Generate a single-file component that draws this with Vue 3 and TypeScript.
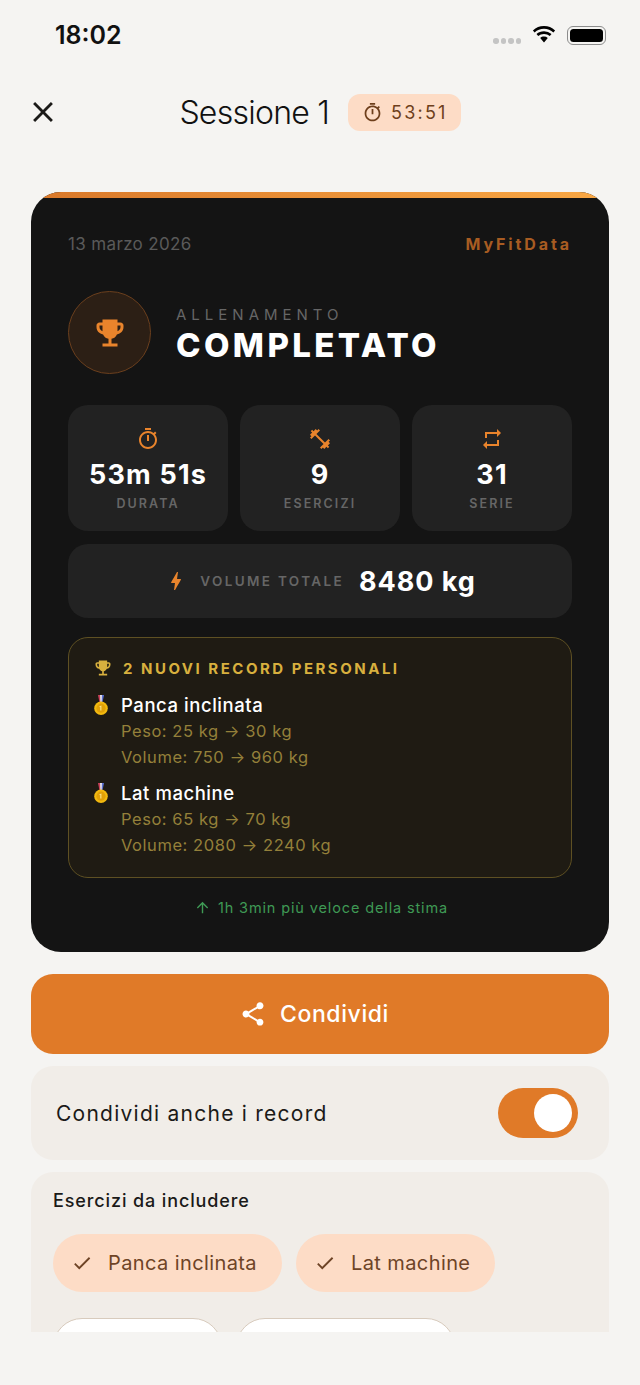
<script setup lang="ts">
const icons = {
  timer: 'M15 1H9v2h6V1zm-4 13h2V8h-2v6zm8.03-6.61l1.42-1.42c-.43-.51-.9-.99-1.41-1.41l-1.42 1.42C16.07 4.74 14.12 4 12 4c-4.97 0-9 4.03-9 9s4.02 9 9 9 9-4.03 9-9c0-2.12-.74-4.07-1.97-5.61zM12 20c-3.87 0-7-3.13-7-7s3.13-7 7-7 7 3.13 7 7-3.13 7-7 7z',
  trophy: 'M19 5h-2V3H7v2H5c-1.1 0-2 .9-2 2v1c0 2.55 1.92 4.63 4.39 4.94.63 1.5 1.98 2.63 3.61 2.96V19H7v2h10v-2h-4v-3.1c1.63-.33 2.98-1.46 3.61-2.96C19.08 12.63 21 10.55 21 8V7c0-1.1-.9-2-2-2zM5 8V7h2v3.82C5.84 10.4 5 9.3 5 8zm14 0c0 1.3-.84 2.4-2 2.82V7h2v1z',
  dumbbell: 'M20.57 14.86L22 13.43 20.57 12 17 15.57 8.43 7 12 3.43 10.57 2 9.14 3.43 7.71 2 5.57 4.14 4.14 2.71 2.71 4.14l1.43 1.43L2 7.71l1.43 1.43L2 10.57 3.43 12 7 8.43 15.57 17 12 20.57 13.43 22l1.43-1.43L16.29 22l2.14-2.14 1.43 1.43 1.43-1.43-1.43-1.43L22 16.29z',
  repeat: 'M7 7h10v3l4-4-4-4v3H5v6h2V7zm10 10H7v-3l-4 4 4 4v-3h12v-6h-2v4z',
  bolt: 'M11 21h-1l1-7H7.5c-.58 0-.57-.32-.38-.66.19-.34.05-.08.07-.12C8.48 10.94 10.42 7.54 13 3h1l-1 7h3.5c.49 0 .56.33.47.51l-.07.15C12.96 17.55 11 21 11 21z',
  share: 'M18 16.08c-.76 0-1.44.3-1.96.77L8.91 12.7c.05-.23.09-.46.09-.7s-.04-.47-.09-.7l7.05-4.11c.54.5 1.25.81 2.04.81 1.66 0 3-1.34 3-3s-1.34-3-3-3-3 1.34-3 3c0 .24.04.47.09.7L8.04 9.81C7.5 9.31 6.79 9 6 9c-1.66 0-3 1.34-3 3s1.34 3 3 3c.79 0 1.5-.31 2.04-.81l7.12 4.16c-.05.21-.08.43-.08.65 0 1.61 1.31 2.92 2.92 2.92s2.92-1.31 2.92-2.92-1.31-2.92-2.92-2.92z',
  check: 'M9 16.17L4.83 12l-1.42 1.41L9 19 21 7l-1.41-1.41z',
  up: 'M4 12l1.41 1.41L11 7.83V20h2V7.83l5.58 5.59L20 12l-8-8-8 8z',
  close: 'M19 6.41L17.59 5 12 10.59 6.41 5 5 6.41 10.59 12 5 17.59 6.41 19 12 13.41 17.59 19 19 17.59 13.41 12z',
};

const stats = [
  { icon: icons.timer, value: '53m 51s', label: 'DURATA' },
  { icon: icons.dumbbell, value: '9', label: 'ESERCIZI' },
  { icon: icons.repeat, value: '31', label: 'SERIE' },
];

const records = [
  { name: 'Panca inclinata', lines: ['Peso: 25 kg → 30 kg', 'Volume: 750 → 960 kg'] },
  { name: 'Lat machine', lines: ['Peso: 65 kg → 70 kg', 'Volume: 2080 → 2240 kg'] },
];

const selected = ['Panca inclinata', 'Lat machine'];
</script>

<template>
  <div class="screen">
    <div class="status">
      <span class="time">18:02</span>
      <div class="status-icons">
        <div class="dots"><i></i><i></i><i></i><i></i></div>
        <svg class="wifi" viewBox="0 0 24 18" width="24" height="19">
          <path d="M12 3.2c3.6 0 6.9 1.4 9.4 3.7l1.7-2A16.4 16.4 0 0 0 12 .6 16.4 16.4 0 0 0 .9 4.9l1.7 2A13.8 13.8 0 0 1 12 3.2z" />
          <path d="M12 8.4c2.2 0 4.2.8 5.8 2.2l1.7-2A11.3 11.3 0 0 0 12 5.8c-2.9 0-5.5 1-7.5 2.8l1.7 2A8.7 8.7 0 0 1 12 8.4z" />
          <path d="M12 11c-1.4 0-2.8.5-3.8 1.4L12 17l3.8-4.6A5.8 5.8 0 0 0 12 11z" />
        </svg>
        <div class="battery"><div class="battery-fill"></div></div>
      </div>
    </div>

    <header class="header">
      <svg class="close" viewBox="0 0 24 24" width="34" height="34"><path :d="icons.close" /></svg>
      <div class="header-center">
        <span class="title">Sessione 1</span>
        <div class="badge">
          <svg viewBox="0 0 24 24" width="21" height="21"><path :d="icons.timer" /></svg>
          <span>53:51</span>
        </div>
      </div>
    </header>

    <main class="content">
      <section class="card">
        <div class="card-bar"></div>
        <div class="card-body">
          <div class="card-top">
            <span class="date">13 marzo 2026</span>
            <span class="brand">MyFitData</span>
          </div>

          <div class="hero">
            <div class="hero-circle">
              <svg viewBox="0 0 24 24" width="36" height="36"><path :d="icons.trophy" /></svg>
            </div>
            <div>
              <div class="hero-small">ALLENAMENTO</div>
              <div class="hero-big">COMPLETATO</div>
            </div>
          </div>

          <div class="stats">
            <div v-for="s in stats" :key="s.label" class="stat">
              <svg viewBox="0 0 24 24" width="24" height="24"><path :d="s.icon" /></svg>
              <div class="stat-value">{{ s.value }}</div>
              <div class="stat-label">{{ s.label }}</div>
            </div>
          </div>

          <div class="volume">
            <svg viewBox="0 0 24 24" width="24" height="24"><path :d="icons.bolt" /></svg>
            <span class="volume-label">VOLUME TOTALE</span>
            <span class="volume-value">8480 kg</span>
          </div>

          <div class="records">
            <div class="records-head">
              <svg viewBox="0 0 24 24" width="20" height="20"><path :d="icons.trophy" /></svg>
              <span>2 NUOVI RECORD PERSONALI</span>
            </div>
            <div v-for="r in records" :key="r.name" class="record">
              <div class="record-name">
                <svg class="medal" viewBox="0 0 16 22" width="16" height="22">
                  <path d="M5 1h2.2l1.3 8H6.6z" fill="#c9425a" />
                  <path d="M11 1H8.8L7.5 9h1.9z" fill="#5a6fd0" />
                  <path d="M7 1h2l-.4 8H7.4z" fill="#e8e4ee" />
                  <circle cx="8" cy="14.2" r="6.8" fill="#f2b90f" />
                  <circle cx="8" cy="14.2" r="4.6" fill="#e0a008" />
                  <path d="M8.4 11.6v4.8H7.3v-3.6l-.8.4v-1z" fill="#fbe58a" />
                </svg>
                <span>{{ r.name }}</span>
              </div>
              <div v-for="l in r.lines" :key="l" class="record-line">{{ l }}</div>
            </div>
          </div>

          <div class="faster">
            <svg viewBox="0 0 24 24" width="17" height="17"><path :d="icons.up" /></svg>
            <span>1h 3min più veloce della stima</span>
          </div>
        </div>
      </section>

      <button class="share">
        <svg viewBox="0 0 24 24" width="28" height="28"><path :d="icons.share" /></svg>
        <span>Condividi</span>
      </button>

      <div class="toggle-row">
        <span>Condividi anche i record</span>
        <div class="toggle"><div class="thumb"></div></div>
      </div>

      <div class="include">
        <div class="include-title">Esercizi da includere</div>
        <div class="chips">
          <div v-for="c in selected" :key="c" class="chip">
            <svg viewBox="0 0 24 24" width="22" height="22"><path :d="icons.check" /></svg>
            <span>{{ c }}</span>
          </div>
        </div>
        <div class="chips">
          <div class="chip-off chip-a"></div>
          <div class="chip-off chip-b"></div>
        </div>
      </div>
    </main>
  </div>
</template>

<style scoped>
.screen {
  width: 640px;
  height: 1385px;
  overflow: hidden;
  background: #f5f4f2;
  font-family: Inter, "Liberation Sans", sans-serif;
  color: #1b1a18;
}

svg {
  display: block;
  flex-shrink: 0;
  fill: currentColor;
}

.status {
  height: 70px;
  padding: 0 34px 0 55px;
  display: flex;
  align-items: center;
  justify-content: space-between;
  box-sizing: border-box;
}

.time {
  font-size: 25px;
  font-weight: 600;
  color: #111;
}

.status-icons {
  display: flex;
  align-items: center;
}

.dots {
  display: flex;
  gap: 2px;
  margin: 12px 12px 0 0;
}

.dots i {
  width: 5.5px;
  height: 5.5px;
  border-radius: 50%;
  background: #c4c4c4;
}

.wifi {
  color: #000;
  margin: -2px 11px 0 -1px;
}

.battery {
  width: 39px;
  height: 19px;
  padding: 2px;
  box-sizing: border-box;
  border: 1.5px solid #8c8c8c;
  border-radius: 6px;
}

.battery-fill {
  height: 100%;
  background: #000;
  border-radius: 3.5px;
}

.header {
  height: 44px;
  margin: 20px 0 58px;
  padding: 0 26px;
  display: grid;
  grid-template-columns: 1fr auto 1fr;
  align-items: center;
}

.close {
  color: #1b1a18;
}

.header-center {
  grid-column: 2;
  display: flex;
  align-items: center;
  gap: 19px;
}

.title {
  font-size: 32px;
  font-weight: 300;
  letter-spacing: -0.75px;
  color: #111;
}

.badge {
  height: 37px;
  padding: 0 13px 0 14px;
  display: flex;
  align-items: center;
  gap: 8px;
  border-radius: 12px;
  background: #fddcc6;
  color: #6e3f1c;
  font-size: 18px;
  letter-spacing: 2.2px;
}

.content {
  height: 1140px;
  overflow: hidden;
  padding: 0 31px;
  display: flex;
  flex-direction: column;
  gap: 12px;
}

.card {
  flex-shrink: 0;
  height: 760px;
  margin-bottom: 10px;
  border-radius: 30px;
  overflow: hidden;
  background: #141414;
}

.card-bar {
  height: 6px;
  background: linear-gradient(90deg, #d9782a, #f9a845);
}

.card-body {
  padding: 36px 37px 0;
}

.card-top {
  display: flex;
  justify-content: space-between;
  align-items: center;
  line-height: 20px;
}

.date {
  font-size: 17px;
  color: #5a5a5a;
  letter-spacing: 0.35px;
}

.brand {
  font-size: 16px;
  font-weight: 700;
  letter-spacing: 2.9px;
  color: #a85c22;
}

.hero {
  margin-top: 37px;
  display: flex;
  align-items: center;
  gap: 25px;
}

.hero-circle {
  width: 83px;
  height: 83px;
  box-sizing: border-box;
  display: flex;
  align-items: center;
  justify-content: center;
  border-radius: 50%;
  border: 1.5px solid #6b3f1d;
  background: #2c1f15;
  color: #e9842c;
}

.hero-small {
  margin-top: 5px;
  font-size: 15px;
  line-height: 18px;
  letter-spacing: 5px;
  color: #666;
}

.hero-big {
  margin-top: 1px;
  font-size: 33px;
  line-height: 40px;
  font-weight: 800;
  letter-spacing: 3.4px;
  color: #fff;
}

.stats {
  margin-top: 31px;
  display: grid;
  grid-template-columns: repeat(3, 1fr);
  gap: 12px;
}

.stat {
  height: 126px;
  padding-top: 22px;
  box-sizing: border-box;
  display: flex;
  flex-direction: column;
  align-items: center;
  border-radius: 20px;
  background: #222;
  color: #e9842c;
}

.stat-value {
  margin-top: 7px;
  font-size: 27px;
  line-height: 34px;
  font-weight: 700;
  letter-spacing: 1.2px;
  color: #fff;
}

.stat-label {
  margin-top: 2px;
  font-size: 12.5px;
  line-height: 20px;
  font-weight: 600;
  letter-spacing: 2.1px;
  color: #666;
}

.volume {
  margin-top: 13px;
  height: 74px;
  display: flex;
  align-items: center;
  justify-content: center;
  border-radius: 20px;
  background: #222;
  color: #e9842c;
}

.volume-label {
  margin-left: 12px;
  font-size: 13.5px;
  font-weight: 600;
  letter-spacing: 2.35px;
  color: #666;
}

.volume-value {
  margin-left: 15px;
  font-size: 27px;
  font-weight: 700;
  letter-spacing: 0.95px;
  color: #fff;
}

.records {
  margin-top: 19px;
  height: 241px;
  box-sizing: border-box;
  padding: 20px 24px 0;
  border: 1px solid #5e5023;
  border-radius: 20px;
  background: #1f1b13;
}

.records-head {
  height: 20px;
  display: flex;
  align-items: center;
  gap: 10px;
  margin-bottom: 15px;
  font-size: 15px;
  font-weight: 700;
  letter-spacing: 2.5px;
  color: #d8b03e;
}

.record + .record {
  margin-top: 11px;
}

.record-name {
  display: flex;
  align-items: center;
  gap: 12px;
  height: 24px;
  margin-bottom: 1px;
  font-size: 18.5px;
  font-weight: 500;
  letter-spacing: 0.55px;
  color: #fff;
}

.record-line {
  padding-left: 28px;
  font-size: 16.5px;
  line-height: 26px;
  letter-spacing: 0.55px;
  color: #94803a;
}

.faster {
  margin-top: 19px;
  height: 20px;
  display: flex;
  align-items: center;
  justify-content: center;
  gap: 7px;
  font-size: 14.5px;
  letter-spacing: 0.87px;
  color: #3f9a55;
}

.faster svg {
  margin-left: 2px;
}

.share {
  flex-shrink: 0;
  height: 80px;
  border: none;
  padding: 0 12px 0 0;
  display: flex;
  align-items: center;
  justify-content: center;
  gap: 13px;
  border-radius: 22px;
  background: #e07a28;
  color: #fff;
  font-family: inherit;
  font-size: 23px;
  font-weight: 500;
  letter-spacing: 0.6px;
}

.toggle-row {
  flex-shrink: 0;
  height: 94px;
  padding: 0 31px 0 25px;
  box-sizing: border-box;
  display: flex;
  align-items: center;
  justify-content: space-between;
  border-radius: 22px;
  background: #f1ede8;
  font-size: 21px;
  letter-spacing: 1.25px;
}

.toggle {
  width: 80px;
  height: 50px;
  padding: 6px 6px;
  box-sizing: border-box;
  display: flex;
  justify-content: flex-end;
  border-radius: 25px;
  background: #e07a28;
}

.thumb {
  width: 38px;
  height: 38px;
  border-radius: 50%;
  background: #fff;
}

.include {
  flex-shrink: 0;
  padding: 17px 22px 0;
  height: 300px;
  border-radius: 22px 22px 0 0;
  background: #f1ede8;
}

.include-title {
  font-size: 18px;
  line-height: 24px;
  font-weight: 500;
  letter-spacing: 0.88px;
  margin-bottom: 21px;
}

.chips {
  display: flex;
  gap: 14px;
  margin-bottom: 26px;
}

.chip {
  height: 58px;
  padding: 0 25px 0 18px;
  box-sizing: border-box;
  display: flex;
  align-items: center;
  gap: 15px;
  border-radius: 29px;
  background: #fddcc6;
  color: #6e4426;
  font-size: 20px;
  letter-spacing: 0.4px;
}

.chip-off {
  height: 58px;
  box-sizing: border-box;
  border: 1.5px solid #d8cbbd;
  border-radius: 29px;
  background: #fff;
}

.chip-a {
  width: 169px;
}

.chip-b {
  width: 219px;
}
</style>

<style>
body {
  margin: 0;
}
</style>
